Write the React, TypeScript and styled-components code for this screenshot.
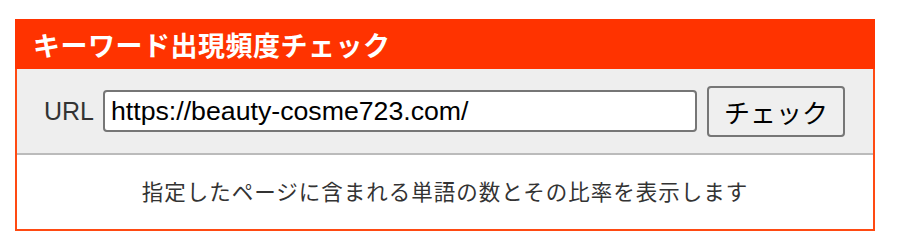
import React from "react";
import styled, { createGlobalStyle } from "styled-components";

const Global = createGlobalStyle`
  html, body { margin: 0; padding: 0; background: #fff; }
  body { font-family: "Liberation Sans", "Noto Sans CJK JP", sans-serif; }
`;

const Page = styled.div`
  padding: 19px 0 0 15px;
`;

const Panel = styled.section`
  width: 860px;
  box-sizing: border-box;
  border: 2px solid #ff4a12;
  border-top: none;
  background: #fff;
`;

const Header = styled.h2`
  margin: 0 -2px;
  height: 50px;
  box-sizing: border-box;
  padding: 0 0 0 18px;
  display: flex;
  align-items: center;
  background: #ff3300;
  color: #fff;
  font-family: "Noto Sans CJK JP", sans-serif;
  font-weight: 700;
  font-size: 27px;
  letter-spacing: 0.5px;
`;

const FormRow = styled.form`
  height: 86px;
  box-sizing: border-box;
  display: flex;
  align-items: center;
  padding: 0 0 0 27px;
  background: #eeeeee;
  border-bottom: 2px solid #bbbbbb;
`;

const Label = styled.label`
  font-family: "Liberation Sans", sans-serif;
  font-size: 25px;
  color: #333;
  margin-right: 9px;
`;

const UrlInput = styled.input`
  width: 594px;
  height: 42px;
  box-sizing: border-box;
  border: 2px solid #767676;
  border-radius: 4px;
  background: #fff;
  padding: 0 6px;
  font-family: "Liberation Sans", sans-serif;
  font-size: 26.7px;
  color: #000;
  outline: none;
`;

const Button = styled.button`
  margin-left: 10px;
  width: 138px;
  height: 51px;
  box-sizing: border-box;
  border: 2px solid #767676;
  border-radius: 4px;
  background: #efefef;
  font-family: "Noto Sans CJK JP", sans-serif;
  font-size: 26px;
  color: #000;
  padding: 0;
`;

const Description = styled.p`
  margin: 0;
  height: 74px;
  display: flex;
  align-items: center;
  justify-content: center;
  font-family: "Noto Sans CJK JP", sans-serif;
  font-size: 21.5px;
  color: #333;
  letter-spacing: 1px;
  padding-bottom: 3px;
  box-sizing: border-box;
`;

export default function App() {
  return (
    <>
      <Global />
      <Page>
        <Panel>
          <Header>キーワード出現頻度チェック</Header>
          <FormRow onSubmit={(e) => e.preventDefault()}>
            <Label htmlFor="url">URL</Label>
            <UrlInput id="url" type="text" defaultValue="https://beauty-cosme723.com/" />
            <Button type="submit">チェック</Button>
          </FormRow>
          <Description>指定したページに含まれる単語の数とその比率を表示します</Description>
        </Panel>
      </Page>
    </>
  );
}
